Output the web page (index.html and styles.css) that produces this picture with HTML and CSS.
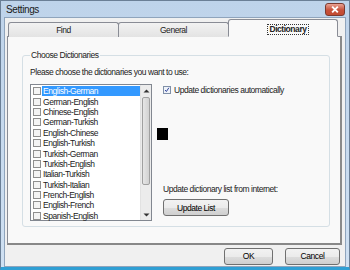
FILE: index.html
```html
<!DOCTYPE html>
<html>
<head>
<meta charset="utf-8">
<link rel="stylesheet" href="styles.css">
</head>
<body>
<div class="window">
  <div class="titlebar">
    <span class="title">Settings</span>
    <span class="close"><svg width="19" height="13" viewBox="0 0 19 13"><path d="M6.5 3.5 L12.5 9.5 M12.5 3.5 L6.5 9.5" stroke="#fff" stroke-width="2"/></svg></span>
  </div>
  <div class="client">
    <div class="tabs">
      <div class="tab">Find</div>
      <div class="tab">General</div>
      <div class="tab active"><span class="focus">Dictionary</span></div>
    </div>
    <div class="panel">
      <fieldset class="group">
        <legend>Choose Dictionaries</legend>
        <div class="prompt">Please choose the dictionaries you want to use:</div>
        <div class="columns">
          <div class="listbox">
            <ul class="items">
              <li class="sel"><span class="cb"></span><span class="lbl">English-German</span></li>
              <li><span class="cb"></span><span class="lbl">German-English</span></li>
              <li><span class="cb"></span><span class="lbl">Chinese-English</span></li>
              <li><span class="cb"></span><span class="lbl">German-Turkish</span></li>
              <li><span class="cb"></span><span class="lbl">English-Chinese</span></li>
              <li><span class="cb"></span><span class="lbl">English-Turkish</span></li>
              <li><span class="cb"></span><span class="lbl">Turkish-German</span></li>
              <li><span class="cb"></span><span class="lbl">Turkish-English</span></li>
              <li><span class="cb"></span><span class="lbl">Italian-Turkish</span></li>
              <li><span class="cb"></span><span class="lbl">Turkish-Italian</span></li>
              <li><span class="cb"></span><span class="lbl">French-English</span></li>
              <li><span class="cb"></span><span class="lbl">English-French</span></li>
              <li><span class="cb"></span><span class="lbl">Spanish-English</span></li>
            </ul>
            <div class="scrollbar">
              <div class="arrow"><svg width="7" height="4" viewBox="0 0 7 4"><path d="M0.5 3.5 L3.5 0.5 L6.5 3.5Z" fill="#333"/></svg></div>
              <div class="track"><div class="thumb"></div></div>
              <div class="arrow"><svg width="7" height="4" viewBox="0 0 7 4"><path d="M0.5 0.5 L3.5 3.5 L6.5 0.5Z" fill="#333"/></svg></div>
            </div>
          </div>
          <div class="right">
            <label class="check"><span class="cb checked"><svg width="8" height="8" viewBox="0 0 8 8"><path d="M1.5 4 L3.2 6 L6.5 1" stroke="#2b3f99" stroke-width="1.3" fill="none"/></svg></span>Update dictionaries automatically</label>
            <div class="swatch"></div>
            <div class="spacer"></div>
            <div class="updlabel">Update dictionary list from internet:</div>
            <button class="btn upd">Update List</button>
          </div>
        </div>
      </fieldset>
    </div>
    <div class="footer">
      <button class="btn ok">OK</button>
      <button class="btn cancel">Cancel</button>
    </div>
  </div>
</div>
</body>
</html>
```
FILE: styles.css
```css
* { box-sizing: border-box; }
html, body { margin: 0; padding: 0; }
body {
  width: 350px; height: 270px; overflow: hidden;
  font-family: "Liberation Sans", Arial, sans-serif;
  font-size: 8.5px; letter-spacing: -0.45px; color: #222;
}
.window {
  width: 350px; height: 270px;
  background: linear-gradient(#bed3ea, #cfe0f2);
  border: 1px solid #6b7f96;
  border-bottom: 3px solid #2f9fd4;
  display: flex; flex-direction: column;
  padding: 0 3px 0 3px;
}
.titlebar {
  height: 16px; display: flex; align-items: center; justify-content: space-between;
  padding-left: 2px;
}
.title { font-size: 10px; letter-spacing: -0.4px; color: #1a1a1a; }
.close {
  width: 20px; height: 13px; margin-top: 1px; margin-right: 1px;
  background: linear-gradient(#e9a294, #c7503a 55%, #c24a30);
  border: 1px solid #7b3a30; border-radius: 3px;
  display: flex; align-items: center; justify-content: center;
}
.close svg { display: block; }
.client {
  flex: 1; background: #f0f0f0; border: 1px solid #8fa4bc;
  display: flex; flex-direction: column;
  padding: 1px 3px 0 2px;
}
.tabs { display: flex; height: 18px; align-items: flex-end; padding-left: 1px; margin-bottom: -1px; position: relative; z-index: 1; }
.tab {
  width: 111px; height: 15px;
  border: 1px solid #898c95; border-bottom: none;
  border-radius: 3px 3px 0 0;
  background: linear-gradient(#f2f2f2, #e3e3e3);
  display: flex; align-items: center; justify-content: center;
  margin-right: -1px;
}
.tab.active {
  height: 18px; background: #f9f9f9; width: 110px;
  border-bottom: 1px solid #f9f9f9;
  font-weight: bold; align-items: flex-start; padding-top: 4px; padding-left: 10px;
}
.focus { border: 1px dotted #333; padding: 0 1px; line-height: 9px; }
.panel {
  height: 209px;
  border: 1px solid #898c95; border-right: 2px solid #8a8a8a; border-bottom: 2px solid #888;
  background: #f9f9f9;
  padding: 14px 10px 0 14px;
}
.group {
  margin: 0; height: 176px;
  border: 1px solid #d5dfe5; border-radius: 3px;
  padding: 0 6px 0 7px;
}
.group legend { padding: 0 1px; margin-left: 0; line-height: 9px; }
.prompt { margin-top: 6px; height: 12px; line-height: 12px; }
.columns { display: flex; gap: 11px; margin-top: 6px; }
.listbox {
  width: 122px; height: 137px; background: #fff;
  border: 1px solid #828790; display: flex;
}
.items { list-style: none; margin: 0; padding: 1px 0 0 2px; flex: 1; }
.items li { height: 10.4px; display: flex; align-items: center; }
.cb {
  width: 8px; height: 8px; border: 1px solid #8f8f8f; background: #f4f4f4;
  margin-right: 1px; flex: none; display: flex; align-items: center; justify-content: center;
}
.lbl { padding: 0 1px; line-height: 10px; flex: 1; }
.sel .lbl { background: #3399ff; color: #fff; }
.scrollbar { width: 11px; display: flex; flex-direction: column; background: #ececec; border-left: 1px solid #e2e2e2; }
.arrow { height: 11px; display: flex; align-items: center; justify-content: center; }
.arrow svg { display: block; }
.track { flex: 1; padding: 1px 1px; }
.thumb { height: 88px; background: linear-gradient(90deg, #e6e6e6, #d2d2d2); border: 1px solid #a0a0a0; border-radius: 2px; }
.right { display: flex; flex-direction: column; align-items: flex-start; padding-top: 1px; }
.check { display: flex; align-items: center; height: 10px; }
.check .cb { margin-right: 3px; background: #eef2f8; border-color: #8090a8; }
.check .cb svg { display: block; }
.swatch { width: 11px; height: 12px; background: #000; margin-top: 33px; margin-left: -6px; }
.spacer { flex: 1; }
.updlabel { height: 12px; }
.btn {
  font-family: inherit; font-size: 8.5px; letter-spacing: -0.45px; color: #000;
  border: 1px solid #707070; border-radius: 3px;
  background: linear-gradient(#f2f2f2 0%, #ebebeb 50%, #dddddd 51%, #cfcfcf 100%);
  padding: 0; margin: 0;
}
.upd { width: 66px; height: 17px; margin-top: 3px; margin-bottom: 5px; }
.footer { flex: 1; display: flex; justify-content: flex-end; align-items: center; gap: 12px; padding-right: 2px; padding-top: 1px; }
.ok { width: 49px; height: 17px; }
.cancel { width: 55px; height: 17px; }
```
